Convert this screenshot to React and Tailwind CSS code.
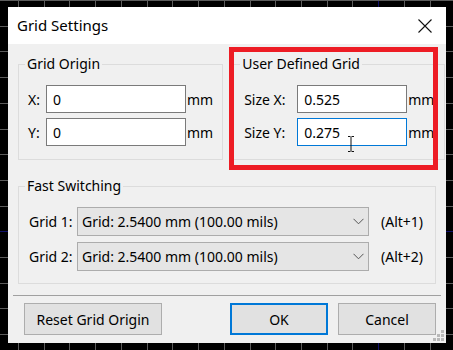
import React from "react";

const FONT = { fontFamily: '"Noto Sans", "Open Sans", sans-serif' };

function GridCanvas() {
  const xs = [];
  for (let k = 0; k < 18; k++) xs.push(18 + k * 25.73);
  const ys = [];
  for (let k = 0; k < 15; k++) ys.push(k * 25.7);
  return (
    <svg className="absolute inset-0" width="453" height="350">
      {xs.map((x, i) => (
        <line key={"v" + i} x1={Math.round(x) + 0.5} y1="0" x2={Math.round(x) + 0.5} y2="350" stroke={i === 14 ? "#10106a" : "#5c5c5c"} />
      ))}
      {ys.map((y, i) => (
        <line key={"h" + i} x1="0" y1={Math.round(y) + 0.5} x2="453" y2={Math.round(y) + 0.5} stroke={i === 9 ? "#10106a" : "#5c5c5c"} />
      ))}
    </svg>
  );
}

function Field({ label, labelW, inputW, value, focused }) {
  return (
    <div className="flex items-center h-[28px]">
      <span className="text-[14px] text-black" style={{ width: labelW }}>{label}</span>
      <div
        className={
          "h-[28px] bg-white flex items-center pl-[6px] text-[14px] text-black border " +
          (focused ? "border-[#0078d7]" : "border-[#7a7a7a]")
        }
        style={{ width: inputW }}
      >
        {value}
      </div>
      <span className="ml-[1px] text-[14px] text-black">mm</span>
    </div>
  );
}

function Chevron() {
  return (
    <svg width="11" height="7" viewBox="0 0 11 7">
      <path d="M0.5 0.8 L5.5 5.8 L10.5 0.8" fill="none" stroke="#555" strokeWidth="1" />
    </svg>
  );
}

function GridSelect({ label, alt }) {
  return (
    <div className="flex items-center">
      <span className="w-[48px] text-[14px] text-black">{label}</span>
      <div className="w-[292px] h-[29px] bg-[#e5e5e5] border border-[#acacac] flex items-center justify-between pl-[4px] pr-[4px] text-[14px] text-black">
        <span>Grid: 2.5400 mm (100.00 mils)</span>
        <Chevron />
      </div>
      <span className="ml-[12px] text-[14px] text-black">{alt}</span>
    </div>
  );
}

export default function App() {
  return (
    <div className="relative w-[453px] h-[350px] bg-black overflow-hidden pt-[7px] pl-[8px]" style={FONT}>
      <GridCanvas />
      <div className="relative w-[438px] h-[336px] bg-[#f0f0f0] flex flex-col">
        {/* title bar */}
        <div className="h-[37px] bg-white flex items-center justify-between pl-[9px] pr-[14px]">
          <span className="text-[15px] text-black">Grid Settings</span>
          <svg width="14" height="14" viewBox="0 0 14 14">
            <path d="M0.5 0.5 L13.5 13.5 M13.5 0.5 L0.5 13.5" stroke="#111" strokeWidth="1.1" />
          </svg>
        </div>

        {/* top groups */}
        <div className="flex gap-[10px] mt-[10px] px-[10px]">
          <fieldset className="w-[204px] border border-[#dcdcdc] px-[9px] pb-[13px]">
            <legend className="-ml-[3px] px-[2px] text-[14px] leading-[20px] text-black">Grid Origin</legend>
            <div className="flex flex-col gap-[5px] pt-[11px]">
              <Field label="X:" labelW={18} inputW={140} value="0" />
              <Field label="Y:" labelW={18} inputW={140} value="0" />
            </div>
          </fieldset>
          <fieldset className="w-[204px] border border-[#dcdcdc] px-[10px] pb-[13px]">
            <legend className="-ml-[4px] px-[2px] text-[14px] leading-[20px] text-black">User Defined Grid</legend>
            <div className="flex flex-col gap-[5px] pt-[11px]">
              <Field label="Size X:" labelW={53} inputW={110} value="0.525" />
              <Field label="Size Y:" labelW={53} inputW={110} value="0.275" focused />
            </div>
          </fieldset>
        </div>

        {/* fast switching */}
        <fieldset className="mx-[10px] mt-[16px] border border-[#dcdcdc] pl-[10px] pb-[12px]">
          <legend className="-ml-[4px] px-[2px] text-[14px] leading-[20px] text-black">Fast Switching</legend>
          <div className="flex flex-col gap-[6px] pt-[11px]">
            <GridSelect label="Grid 1:" alt="(Alt+1)" />
            <GridSelect label="Grid 2:" alt="(Alt+2)" />
          </div>
        </fieldset>

        <div className="mx-[5px] mt-[11px] h-px bg-[#a0a0a0]" />

        {/* buttons */}
        <div className="flex items-center mt-[7px] pl-[16px] pr-[10px]">
          <button className="w-[138px] h-[32px] bg-[#e1e1e1] border border-[#adadad] text-[14px] text-black">Reset Grid Origin</button>
          <button className="ml-auto w-[98px] h-[32px] bg-[#e1e1e1] border-2 border-[#0078d7] text-[14px] text-black">OK</button>
          <button className="ml-[10px] w-[98px] h-[32px] bg-[#e1e1e1] border border-[#adadad] text-[14px] text-black">Cancel</button>
        </div>

        {/* resize grip */}
        <svg className="absolute right-[2px] bottom-[2px]" width="11" height="11" viewBox="0 0 11 11">
          <rect x="8" y="0" width="3" height="3" fill="#b8b8b8" />
          <rect x="4" y="4" width="3" height="3" fill="#b8b8b8" />
          <rect x="8" y="4" width="3" height="3" fill="#b8b8b8" />
          <rect x="0" y="8" width="3" height="3" fill="#b8b8b8" />
          <rect x="4" y="8" width="3" height="3" fill="#b8b8b8" />
          <rect x="8" y="8" width="3" height="3" fill="#b8b8b8" />
        </svg>

        {/* text cursor over focused field */}
        <svg className="absolute left-[339px] top-[129px]" width="8" height="16" viewBox="0 0 8 16">
          <path d="M1 0.5 H3.5 M4.5 0.5 H7 M4 1 V15 M1 15.5 H3.5 M4.5 15.5 H7" stroke="#111" strokeWidth="1" fill="none" />
        </svg>

        {/* red highlight */}
        <div className="absolute left-[221px] top-[40px] w-[209px] h-[123px] border-[5px] border-[#ed1c24]" />
      </div>
    </div>
  );
}
